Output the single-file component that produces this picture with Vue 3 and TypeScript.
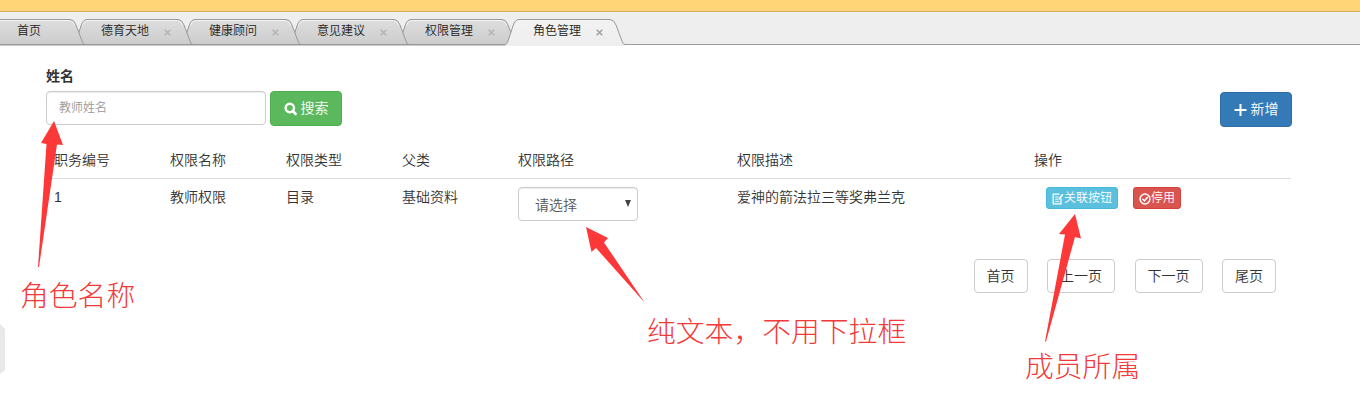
<script setup lang="ts">
import { ref } from 'vue'

interface Tab { label: string; closable: boolean }
interface Role { id: number; name: string; type: string; parent: string; desc: string }

const tabs: Tab[] = [
  { label: '首页', closable: false },
  { label: '德育天地', closable: true },
  { label: '健康顾问', closable: true },
  { label: '意见建议', closable: true },
  { label: '权限管理', closable: true },
  { label: '角色管理', closable: true },
]
const active = ref(5)
const keyword = ref('')
const headers: string[] = ['职务编号', '权限名称', '权限类型', '父类', '权限路径', '权限描述', '操作']
const rows: Role[] = [
  { id: 1, name: '教师权限', type: '目录', parent: '基础资料', desc: '爱神的箭法拉三等奖弗兰克' },
]
const pages: string[] = ['首页', '上一页', '下一页', '尾页']
</script>

<template>
  <div class="page">
    <div class="topbar"></div>
    <nav class="tabs">
      <svg width="0" height="0" class="defs">
        <defs>
          <linearGradient id="tabFill" x1="0" y1="0" x2="0" y2="1">
            <stop offset="0" stop-color="#dedede" />
            <stop offset="1" stop-color="#cbcbcb" />
          </linearGradient>
          <linearGradient id="tabActive" x1="0" y1="0" x2="0" y2="1">
            <stop offset="0" stop-color="#f2f2f2" />
            <stop offset="1" stop-color="#eeeeee" />
          </linearGradient>
        </defs>
      </svg>
      <div
        v-for="(tab, i) in tabs"
        :key="tab.label"
        class="tab"
        :class="{ active: i === active, home: !tab.closable }"
        :style="{ zIndex: i === active ? 20 : 10 - i }"
        @click="active = i"
      >
        <svg class="shape" width="120" height="27" viewBox="0 0 120 27">
          <path
            :fill="i === active ? 'url(#tabActive)' : 'url(#tabFill)'"
            d="M0 26 C2 25 2 24 3 22 L8 7 Q10 .5 14 .5 H105 Q109 .5 111 6 L117 22 Q118 25.500 120 25.500 V27 H0 Z"
          />
          <path
            fill="none"
            stroke="#f4f4f4"
            d="M9 7 Q11 1.500 14.500 1.500 H104.500 Q108 1.500 110 6.500"
          />
          <path
            fill="none"
            stroke="#999"
            d="M0 25.500 C2 25 2 24 3 22 L8 7 Q10 .5 14 .5 H105 Q109 .5 111 6 L117 22 Q118 25.500 120 25.500"
          />
          <path v-if="i !== active" fill="none" stroke="#999" d="M0 25.500 H120" />
        </svg>
        <span class="label">{{ tab.label }}</span>
        <svg v-if="tab.closable" class="close" width="7" height="7" viewBox="0 0 7 7">
          <path d="M.7 .7 L6.300 6.300 M6.300 .7 L.7 6.300" fill="none" stroke-width="1.500" />
        </svg>
      </div>
    </nav>

    <main class="content">
      <label class="field-label" for="name">姓名</label>
      <div class="toolbar">
        <input id="name" v-model="keyword" class="input" type="text" placeholder="教师姓名" />
        <button class="btn search" type="button">
          <svg width="14" height="14" viewBox="0 0 14 14">
            <circle cx="5.800" cy="6" r="4.200" fill="none" stroke="#fff" stroke-width="2.400" />
            <path d="M8.800 9 L11.500 11.900" stroke="#fff" stroke-width="2.800" stroke-linecap="round" />
          </svg>
          <span>搜索</span>
        </button>
        <button class="btn add" type="button">
          <svg width="14" height="14" viewBox="0 0 14 14">
            <path d="M6.500 1 V13 M.5 7 H12.500" stroke="#fff" stroke-width="2" />
          </svg>
          <span>新增</span>
        </button>
      </div>

      <div class="table">
        <div class="row head">
          <div v-for="h in headers" :key="h">{{ h }}</div>
        </div>
        <div v-for="r in rows" :key="r.id" class="row">
          <div>{{ r.id }}</div>
          <div>{{ r.name }}</div>
          <div>{{ r.type }}</div>
          <div>{{ r.parent }}</div>
          <div>
            <div class="select"><span>请选择</span><i class="caret"></i></div>
          </div>
          <div>{{ r.desc }}</div>
          <div class="actions">
            <button class="mini info" type="button">
              <svg width="12" height="12" viewBox="0 0 12 12" fill="none" stroke="#fff">
                <path d="M7.500 1.200 H1.200 V10.800 H9 V5.500" stroke-width="1.300" />
                <path d="M3.200 4 H6.500 M3.200 6.200 H6 M3.200 8.400 H7" />
                <path d="M6.800 6.500 L10.800 1.300" stroke-width="1.600" />
              </svg>
              <span>关联按钮</span>
            </button>
            <button class="mini danger" type="button">
              <svg width="12" height="12" viewBox="0 0 12 12" fill="none" stroke="#fff">
                <circle cx="6" cy="6" r="4.900" stroke-width="1.500" />
                <path d="M3.500 6 L5.400 7.900 L8.700 4" stroke-width="1.600" />
              </svg>
              <span>停用</span>
            </button>
          </div>
        </div>
      </div>

      <div class="pager">
        <button v-for="p in pages" :key="p" type="button">{{ p }}</button>
      </div>
    </main>

    <div class="handle"></div>

    <svg class="arrows" width="1360" height="409" viewBox="0 0 1360 409" fill="#fd3838">
      <path d="M54 121 L63 145 L57 144.500 L39 267 L38 267 L46.500 144 L41 143 Z" />
      <path d="M586 227 L608 238 L604 242.500 L645 303 L596 248 L591.500 252 Z" />
      <path d="M1075 214 L1081 238.500 L1075 237 L1046 341.500 L1045 341.500 L1065 234.500 L1059 234 Z" />
    </svg>
    <div class="note n1">角色名称</div>
    <div class="note n2">纯文本，不用下拉框</div>
    <div class="note n3">成员所属</div>
  </div>
</template>

<style>
body {
  margin: 0;
  background: #fff;
}
</style>

<style scoped>
.page {
  position: relative;
  width: 1360px;
  height: 409px;
  overflow: hidden;
  box-sizing: border-box;
  font: 350 14px/20px "Liberation Sans", "Noto Sans CJK SC", sans-serif;
  color: #333;
}
.page * {
  box-sizing: border-box;
}
button,
input {
  font: inherit;
  margin: 0;
}
.topbar {
  height: 12px;
  background: #ffd577;
  border-bottom: 1px solid #d3ac62;
}
.tabs {
  position: relative;
  display: flex;
  height: 33px;
  padding-top: 7px;
  background: #eee;
  border-bottom: 1px solid #999;
}
.defs {
  position: absolute;
}
.tab {
  position: relative;
  flex: none;
  display: flex;
  align-items: center;
  width: 120px;
  height: 26px;
  margin-right: -12px;
  padding: 0 0 2px 28px;
  font-size: 12px;
  color: #222;
}
.tab:nth-of-type(1) {
  margin-left: -35px;
}
.tab.home {
  padding-left: 52px;
}
.shape {
  position: absolute;
  left: 0;
  top: 0;
}
.label {
  position: relative;
  width: 48px;
  white-space: nowrap;
}
.close {
  position: relative;
  margin: 3px 0 0 15px;
  stroke: #b3b3b3;
}
.active .close {
  stroke: #a0a0a0;
}
.content {
  padding: 21px 68px 0 46px;
}
.field-label {
  display: block;
  height: 25px;
  font-weight: 700;
}
.toolbar {
  display: flex;
  align-items: flex-start;
  height: 51px;
}
.input {
  width: 220px;
  height: 34px;
  padding: 0 12px;
  border: 1px solid #ccc;
  border-radius: 4px;
  box-shadow: inset 0 1px 1px rgba(0, 0, 0, 0.075);
  font-size: 12px;
  outline: 0;
}
.input::placeholder {
  color: #999;
}
.btn {
  display: flex;
  align-items: center;
  justify-content: center;
  gap: 3px;
  width: 72px;
  height: 35px;
  padding: 0 0 2px;
  border: 1px solid;
  border-radius: 4px;
  color: #fff;
}
.btn svg {
  position: relative;
  top: 1px;
}
.search {
  margin-left: 4px;
  background: #5cb85c;
  border-color: #4cae4c;
}
.add {
  margin: 1px 0 0 auto;
  background: #337ab7;
  border-color: #2e6da4;
}
.table {
  width: 1245px;
}
.row {
  display: grid;
  grid-template-columns: 116px 116px 116px 116px 219px 297px 265px;
  height: 72px;
}
.row > div {
  padding: 8px 0 0 8px;
}
.row.head {
  height: 37px;
  border-bottom: 1px solid #ddd;
}
.select {
  display: flex;
  align-items: center;
  justify-content: space-between;
  width: 120px;
  height: 34px;
  padding: 1px 6px 0 16px;
  border: 1px solid #ccc;
  border-radius: 4px;
  box-shadow: inset 0 1px 1px rgba(0, 0, 0, 0.075);
  color: #555;
}
.caret {
  margin-bottom: 2px;
  border: 3px solid transparent;
  border-top: 7px solid #444;
  border-bottom: 0;
}
.row > .actions {
  display: flex;
  align-items: flex-start;
  gap: 15px;
  padding-left: 20px;
}
.mini {
  display: flex;
  align-items: center;
  height: 22px;
  padding: 0 5px;
  border: 1px solid;
  border-radius: 3px;
  font-size: 12px;
  line-height: 18px;
  color: #fff;
}
.mini svg {
  position: relative;
  top: 1px;
}
.info {
  background: #5bc0de;
  border-color: #46b8da;
}
.danger {
  background: #d9534f;
  border-color: #d43f3a;
}
.pager {
  display: flex;
  justify-content: flex-end;
  gap: 19.500px;
  margin: 8px 16px 0 0;
}
.pager button {
  height: 34px;
  padding: 0 12px;
  background: #fff;
  border: 1px solid #ccc;
  border-radius: 4px;
  color: #333;
}
.handle {
  position: absolute;
  left: 0;
  top: 324px;
  width: 5px;
  height: 50px;
  background: #e8e8e8;
  clip-path: polygon(0 0, 100% 5px, 100% 46px, 0 100%);
}
.arrows {
  position: absolute;
  left: 0;
  top: 0;
  z-index: 30;
}
.note {
  position: absolute;
  z-index: 31;
  font-family: "Noto Sans CJK SC", sans-serif;
  font-size: 28.800px;
  font-weight: 300;
  line-height: 40px;
  white-space: nowrap;
  color: #f23a3a;
}
.n1 {
  left: 20px;
  top: 274px;
}
.n2 {
  left: 647px;
  top: 310px;
}
.n3 {
  left: 1025px;
  top: 345px;
}
</style>
